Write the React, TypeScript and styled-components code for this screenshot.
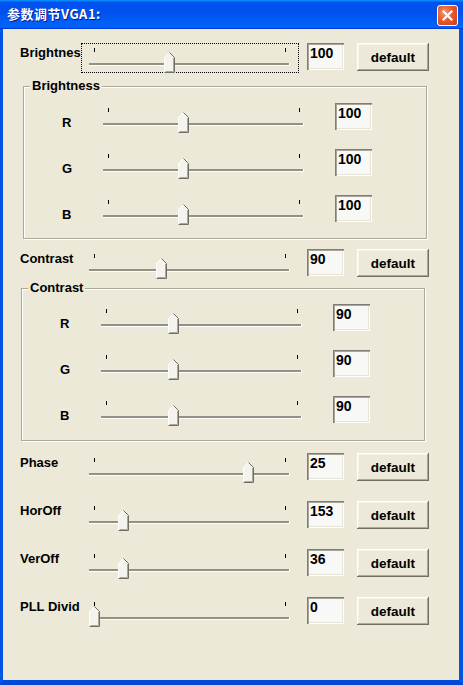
import React from "react";
import styled, { createGlobalStyle } from "styled-components";

const GlobalStyle = createGlobalStyle`
  html, body {
    margin: 0;
    padding: 0;
    background: #ece9d8;
  }
  body {
    font-family: "Liberation Sans", Arial, sans-serif;
  }
`;

const Window = styled.div`
  width: 463px;
  height: 685px;
  display: flex;
  flex-direction: column;
  overflow: hidden;
`;

const TitleBar = styled.div`
  height: 29px;
  flex: none;
  display: flex;
  align-items: flex-start;
  justify-content: space-between;
  box-sizing: border-box;
  padding: 0 5px 0 7px;
  background: linear-gradient(
    180deg,
    #0997ff 0%,
    #0053ee 8%,
    #0050ee 40%,
    #0063f8 88%,
    #0066ff 93%,
    #005bff 95%,
    #003dd7 96%,
    #003dd7 100%
  );
`;

const Title = styled.div`
  margin-top: 6px;
  color: #fff;
  font-family: "Noto Sans CJK SC", "Liberation Sans", sans-serif;
  font-size: 13px;
  font-weight: bold;
  line-height: 16px;
  letter-spacing: 0.5px;
  text-shadow: 1px 1px 0 #0a1883;
`;

const CloseButton = styled.div`
  margin-top: 5px;
  width: 21px;
  height: 21px;
  box-sizing: border-box;
  border: 1px solid #fff;
  border-radius: 3px;
  background: radial-gradient(circle at 35% 35%, #ee9a78 0%, #e35a33 45%, #cc3d18 100%);
  display: flex;
  align-items: center;
  justify-content: center;
`;

const Body = styled.div`
  flex: 1;
  display: flex;
  flex-direction: column;
  background: #ece9d8;
  border-left: 3px solid #0055e5;
  border-right: 4px solid #0055e5;
  border-bottom: 5px solid #0048d8;
  padding: 14px 0 0 17px;
`;

const Row = styled.div<{ $mt?: number }>`
  display: flex;
  align-items: flex-start;
  height: 28px;
  flex: none;
  margin-top: ${(p) => p.$mt ?? 0}px;
`;

const RowLabel = styled.div`
  width: 61px;
  flex: none;
  padding-top: 2px;
  font-size: 13px;
  font-weight: bold;
  line-height: 16px;
  white-space: nowrap;
  color: #000;
`;

const ChannelLabel = styled(RowLabel)`
  width: 33px;
  padding-top: 12px;
`;

const SliderBox = styled.div<{ $focused?: boolean }>`
  position: relative;
  width: 218px;
  height: 30px;
  flex: none;
  outline: ${(p) => (p.$focused ? "1px dotted #000" : "none")};
  outline-offset: -1px;
`;

const Track = styled.div`
  position: absolute;
  left: 8px;
  right: 9px;
  top: 20px;
  height: 2px;
  background: #939185;
  border-bottom: 1px solid #fff;
  border-right: 1px solid #fff;
`;

const Tick = styled.div<{ $left: number }>`
  position: absolute;
  top: 5px;
  left: ${(p) => p.$left}px;
  width: 1px;
  height: 4px;
  background: #000;
`;

const Thumb = styled.svg`
  position: absolute;
  top: 9px;
  width: 11px;
  height: 21px;
  display: block;
`;

const ValueBox = styled.div<{ $ml: number }>`
  width: 37px;
  height: 27px;
  flex: none;
  box-sizing: border-box;
  margin-left: ${(p) => p.$ml}px;
  padding: 2px 2px 0 3px;
  background: #f8f8f6;
  font-size: 14px;
  font-weight: bold;
  line-height: 16px;
  color: #000;
  box-shadow: inset 1px 1px 0 #7f7d75, inset 2px 2px 0 #a8a69c, inset -1px -1px 0 #fff,
    inset -2px -2px 0 #e6e4d8;
`;

const DefaultButton = styled.button`
  width: 72px;
  height: 28px;
  flex: none;
  margin-left: 13px;
  padding: 0;
  border: none;
  background: #ece9d8;
  font-family: "Liberation Sans", Arial, sans-serif;
  font-size: 13.5px;
  font-weight: bold;
  color: #000;
  box-shadow: inset -1px -1px 0 #716f64, inset 1px 1px 0 #fff, inset -2px -2px 0 #aca899,
    inset 2px 2px 0 #f5f4ea;
`;

const Group = styled.div<{ $ml: number; $mt: number; $pt: number }>`
  position: relative;
  width: 404px;
  height: 153px;
  flex: none;
  box-sizing: border-box;
  margin-left: ${(p) => p.$ml}px;
  margin-top: ${(p) => p.$mt}px;
  padding: ${(p) => p.$pt}px 0 0 38px;
  border: 1px solid #aca899;
  box-shadow: inset 1px 1px 0 #fff, 1px 1px 0 #fff;
  display: flex;
  flex-direction: column;
  gap: 18px;
`;

const Legend = styled.div`
  position: absolute;
  top: -9px;
  left: 6px;
  padding: 0 2px;
  background: #ece9d8;
  font-size: 13px;
  font-weight: bold;
  line-height: 16px;
  color: #000;
`;

type SliderProps = { value: number; max: number; focused?: boolean };

const Slider = ({ value, max, focused }: SliderProps) => {
  const center = 13 + (value / max) * 191;
  return (
    <SliderBox $focused={focused}>
      <Tick $left={13} />
      <Tick $left={204} />
      <Track />
      <Thumb viewBox="0 0 11 21" style={{ left: Math.round(center - 5) }}>
        <path d="M0 5.5 L5.5 0 L11 5.5 V21 H0 Z" fill="#f4f3ee" />
        <path d="M0.5 21 V5.5 L5.5 0.5" stroke="#fff" fill="none" />
        <path d="M5.5 0.5 L10.5 5.5 V20.5 H0.5" stroke="#716f64" fill="none" />
        <path d="M9.5 6 V19.5 H1.5" stroke="#aca899" fill="none" />
      </Thumb>
    </SliderBox>
  );
};

type MainRowProps = { label: string; value: number; max: number; mt?: number; focused?: boolean };

const MainRow = ({ label, value, max, mt, focused }: MainRowProps) => (
  <Row $mt={mt}>
    <RowLabel>{label}</RowLabel>
    <Slider value={value} max={max} focused={focused} />
    <ValueBox $ml={8}>{value}</ValueBox>
    <DefaultButton>default</DefaultButton>
  </Row>
);

type ColorGroupProps = { title: string; value: number; ml: number; mt: number; pt: number };

const ColorGroup = ({ title, value, ml, mt, pt }: ColorGroupProps) => (
  <Group $ml={ml} $mt={mt} $pt={pt}>
    <Legend>{title}</Legend>
    {["R", "G", "B"].map((c) => (
      <Row key={c}>
        <ChannelLabel>{c}</ChannelLabel>
        <Slider value={value} max={255} />
        <ValueBox $ml={22}>{value}</ValueBox>
      </Row>
    ))}
  </Group>
);

export default function App() {
  return (
    <>
      <GlobalStyle />
      <Window>
        <TitleBar>
          <Title>参数调节VGA1:</Title>
          <CloseButton>
            <svg width="11" height="11" viewBox="0 0 11 11">
              <path d="M1.5 1.5 L9.5 9.5 M9.5 1.5 L1.5 9.5" stroke="#fff" strokeWidth="2.2" strokeLinecap="square" />
            </svg>
          </CloseButton>
        </TitleBar>
        <Body>
          {/* the label is cut short by the slider in the original dialog */}
          <MainRow label="Brightnes" value={100} max={255} focused />
          <ColorGroup title="Brightness" value={100} ml={3} mt={15} pt={16} />
          <MainRow label="Contrast" value={90} max={255} mt={10} />
          <ColorGroup title="Contrast" value={90} ml={1} mt={11} pt={15} />
          <MainRow label="Phase" value={25} max={31} mt={12} />
          <MainRow label="HorOff" value={153} max={1000} mt={20} />
          <MainRow label="VerOff" value={36} max={240} mt={20} />
          <MainRow label="PLL Divid" value={0} max={255} mt={20} />
        </Body>
      </Window>
    </>
  );
}
